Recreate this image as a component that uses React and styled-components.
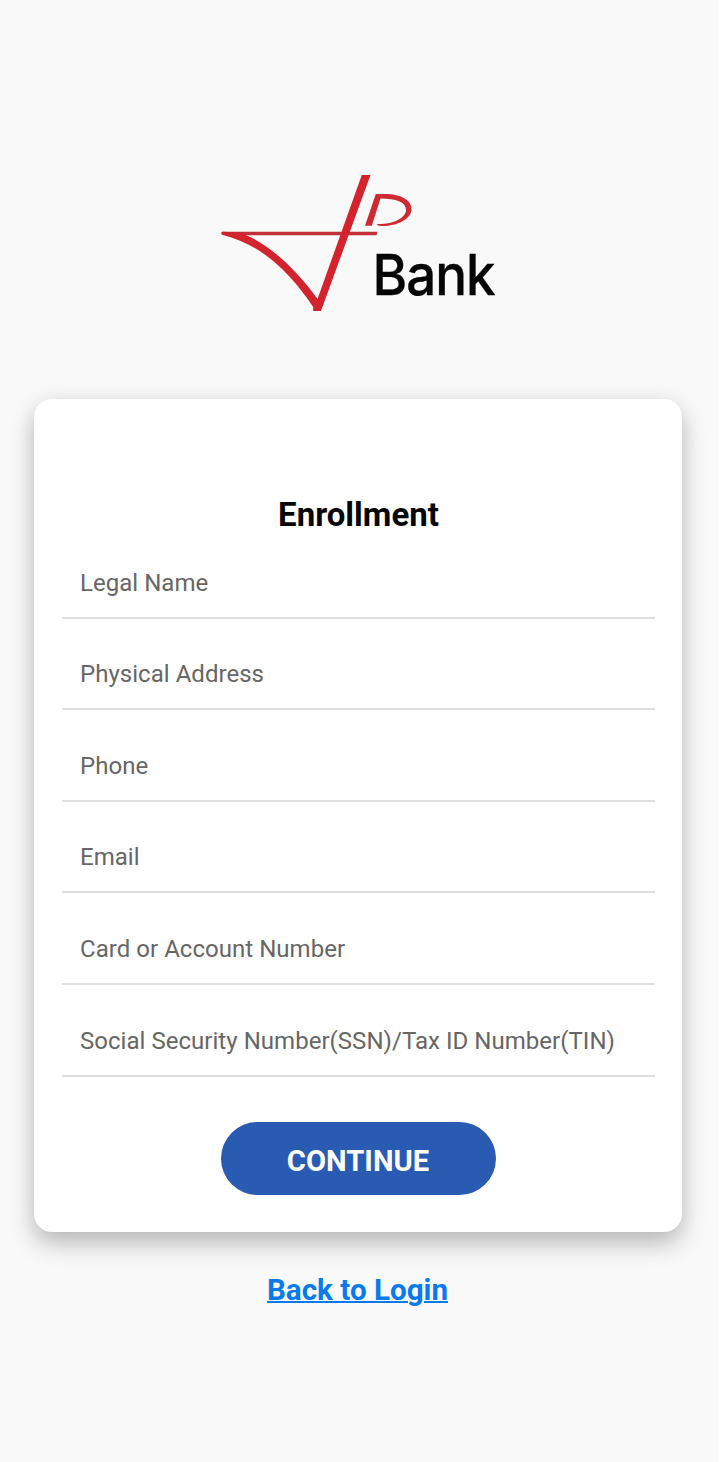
import React from 'react';
import styled, { createGlobalStyle } from 'styled-components';

const GlobalStyle = createGlobalStyle`
  * { box-sizing: border-box; }
  body { margin: 0; background: #fff; }
`;

const Page = styled.main`
  width: 718px;
  min-height: 1462px;
  display: flex;
  flex-direction: column;
  align-items: center;
  padding: 165px 2px 0 0;
  overflow: hidden;
  background: #f9f9f9;
  font-family: Roboto, "Liberation Sans", sans-serif;
`;

const Logo = styled.svg`
  display: block;
  width: 300px;
  height: 160px;
  flex: none;
`;

const Wordmark = styled.text`
  font-family: Inter, "Liberation Sans", sans-serif;
  font-size: 57px;
  font-weight: 500;
  letter-spacing: -1.2px;
  fill: #050505;
  stroke: #050505;
  stroke-width: 0.3px;
`;

const Card = styled.section`
  width: 648px;
  height: 833px;
  margin-top: 74px;
  padding: 96px 27px 0 28px;
  display: flex;
  flex-direction: column;
  align-items: center;
  background: #fff;
  border-radius: 18px;
  box-shadow: 0 12px 24px rgba(0, 0, 0, 0.24), 0 0 20px rgba(0, 0, 0, 0.06);
`;

const Title = styled.h1`
  margin: 0;
  font-size: 33px;
  line-height: 40px;
  font-weight: 700;
  color: #050505;
`;

const Fields = styled.div`
  width: 100%;
  display: flex;
  flex-direction: column;
`;

const Field = styled.label`
  height: 91.6px;
  padding: 0 18px 20px;
  display: flex;
  align-items: flex-end;
  border-bottom: 2px solid #dfdfdf;
  font-size: 24px;
  line-height: 28px;
  letter-spacing: 0.035px;
  color: #666;
  white-space: nowrap;

  &:first-child { height: 83.6px; }
`;

const ContinueButton = styled.button`
  width: 275px;
  height: 73px;
  margin: 45.2px 1px 0 0;
  padding: 5px 0 0;
  border: 0;
  border-radius: 37px;
  background: #2a5bb3;
  color: #fff;
  font: 700 29.2px/36px Roboto, "Liberation Sans", sans-serif;
`;

const LoginLink = styled.a`
  margin: 40px 1px 0 0;
  font-size: 29.6px;
  line-height: 36px;
  font-weight: 700;
  color: #0a7aeb;
  text-decoration: underline;
  text-decoration-thickness: 1.5px;
`;

const fields = [
  'Legal Name',
  'Physical Address',
  'Phone',
  'Email',
  'Card or Account Number',
  'Social Security Number(SSN)/Tax ID Number(TIN)',
];

export default function App() {
  return (
    <>
      <GlobalStyle />
      <Page>
        <Logo viewBox="208 165 300 160" role="img" aria-label="JD Bank">
          <path d="M222 231.8H377.5L376.5 235.2H235Z" fill="#c4303a" />
          <path d="M222 231.8Q220.5 233 222 234.7C256 243 286 266 313.2 307V311H321L370.5 175H361.8L317.5 299C294 266 263 239 238 232.5Z" fill="#d3242d" />
          <path d="M375.8 194H384C401 194 411.5 200 411.5 209C411.5 219.5 396 226.3 382 226Q377 225.9 377 224C392 224.6 406 218.5 406 210C406 202 396 198.5 380.5 198.5L371.8 225.8H365Z" fill="#cd2a33" />
          <Wordmark transform="translate(372.6 295) scale(0.93 1)">Bank</Wordmark>
        </Logo>
        <Card>
          <Title>Enrollment</Title>
          <Fields>
            {fields.map((name) => <Field key={name}>{name}</Field>)}
          </Fields>
          <ContinueButton type="button">CONTINUE</ContinueButton>
        </Card>
        <LoginLink href="#login">Back to Login</LoginLink>
      </Page>
    </>
  );
}
